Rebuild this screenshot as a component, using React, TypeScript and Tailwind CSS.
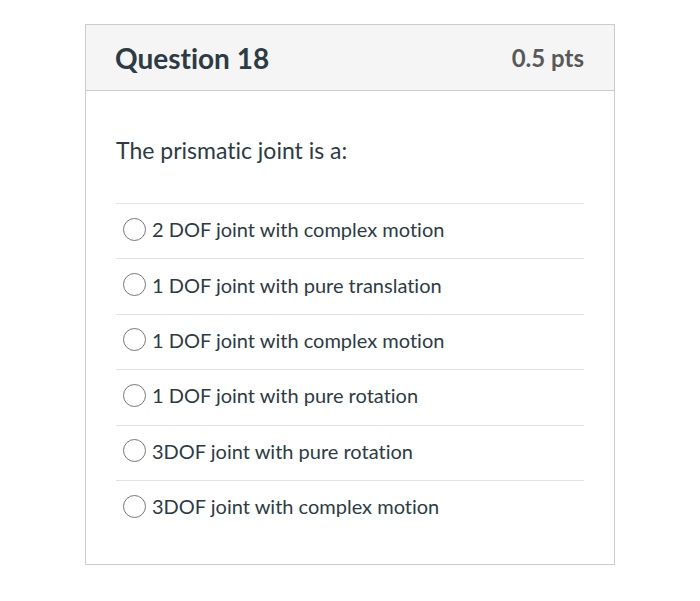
import React from "react";

const options = [
  "2 DOF joint with complex motion",
  "1 DOF joint with pure translation",
  "1 DOF joint with complex motion",
  "1 DOF joint with pure rotation",
  "3DOF joint with pure rotation",
  "3DOF joint with complex motion",
];

export default function App() {
  return (
    <div className="min-h-[601px] w-[700px] bg-white pt-[24px] pl-[85px] [font-variant-ligatures:none]" style={{ fontFamily: "Lato, 'Noto Sans', sans-serif" }}>
      <div className="w-[530px] h-[541px] border border-[#c7cdd1] bg-white">
        <div className="h-[66px] bg-[#f5f5f5] border-b border-[#c7cdd1] px-[30px] flex items-center justify-between">
          <div className="text-[28px] font-bold text-[#2d3b45] leading-none -ml-[1px]">Question 18</div>
          <div className="text-[24px] font-bold text-[#595959] leading-none">0.5 pts</div>
        </div>
        <div className="px-[30px]">
          <div className="pt-[43px] pb-[36px] text-[23px] leading-[33px] text-[#2d3b45]">The prismatic joint is a:</div>
          <div>
            {options.map((o) => (
              <div key={o} className="h-[55.4px] border-t border-[#e2e2e2] flex items-center pb-[4px]">
                <span className="ml-[7px] w-[23px] h-[23px] rounded-full border-[1.5px] border-[#777777] bg-white shrink-0" />
                <span className="ml-[6px] text-[20px] text-[#2d3b45] leading-[24px]">{o}</span>
              </div>
            ))}
          </div>
        </div>
      </div>
    </div>
  );
}
